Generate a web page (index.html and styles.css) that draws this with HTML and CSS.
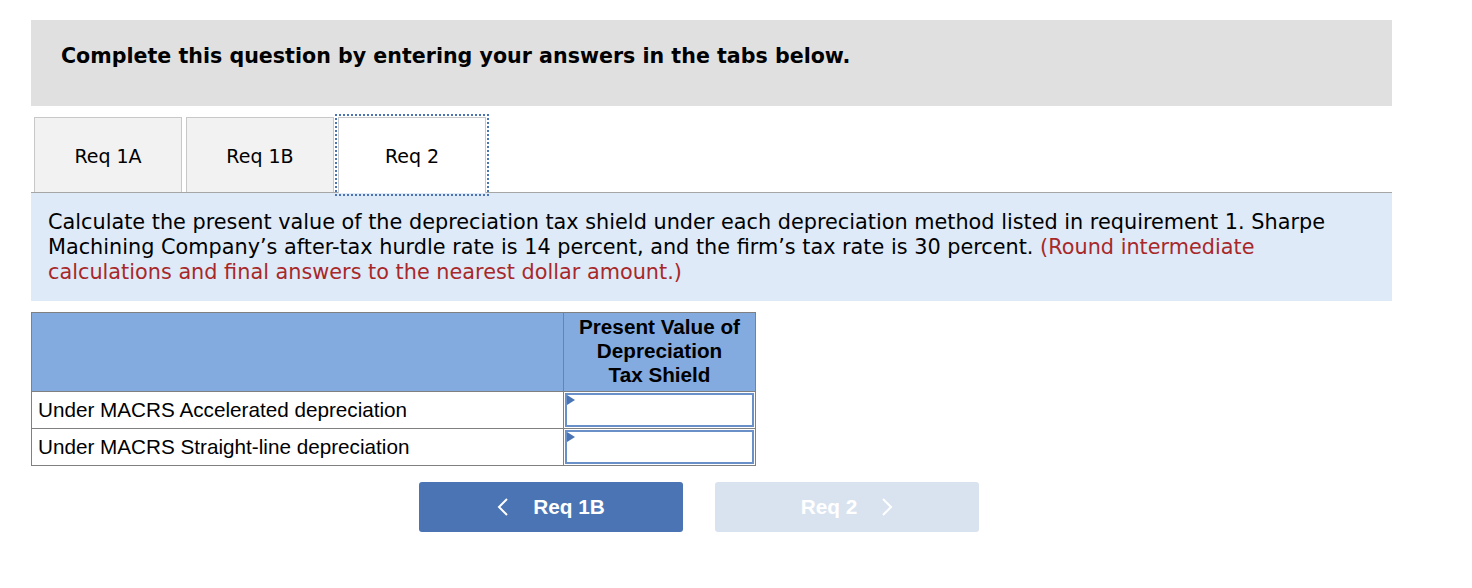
FILE: index.html
```html
<!DOCTYPE html>
<html lang="en">
<head>
    <meta charset="UTF-8">
    <title>Req 2</title>
    <link rel="stylesheet" href="styles.css">
</head>
<body>
    <div class="page">
        <div class="banner">Complete this question by entering your answers in the tabs below.</div>

        <!-- tabs -->
        <div class="tabs">
            <div class="tab">Req 1A</div>
            <div class="tab">Req 1B</div>
            <div class="tab active">Req 2</div>
        </div>

        <div class="prompt">
            Calculate the present value of the depreciation tax shield under each depreciation method listed in requirement 1. Sharpe Machining Company’s after-tax hurdle rate is 14 percent, and the firm’s tax rate is 30 percent. <span class="hint">(Round intermediate calculations and final answers to the nearest dollar amount.)</span>
        </div>

        <table class="grid">
            <tr class="head">
                <th class="label-col"></th>
                <th class="value-col">Present Value of<br>Depreciation<br>Tax Shield</th>
            </tr>
            <tr>
                <td class="label">Under MACRS Accelerated depreciation</td>
                <td class="cell"><div class="entry"><input type="text"></div></td>
            </tr>
            <tr>
                <td class="label">Under MACRS Straight-line depreciation</td>
                <td class="cell"><div class="entry"><input type="text"></div></td>
            </tr>
        </table>

        <div class="nav">
            <button class="nav-btn prev">
                <svg width="12" height="18" viewBox="0 0 12 18"><path d="M10 1 L2 9 L10 17" fill="none" stroke="#fff" stroke-width="2"/></svg>
                <span>Req 1B</span>
            </button>
            <button class="nav-btn next" disabled>
                <span>Req 2</span>
                <svg width="12" height="18" viewBox="0 0 12 18"><path d="M2 1 L10 9 L2 17" fill="none" stroke="#fff" stroke-width="2"/></svg>
            </button>
        </div>
    </div>
</body>
</html>
```

FILE: styles.css
```css
body {
    margin: 0;
    background: #fff;
    font-family: "DejaVu Sans", Verdana, sans-serif;
    color: #000;
}
.page {
    width: 1361px;
    padding: 20px 0 0 31px;
}
.banner {
    height: 86px;
    box-sizing: border-box;
    padding: 24px 30px 0;
    background: #e0e0e0;
    font-size: 20.6px;
    font-weight: bold;
    line-height: 24px;
}
.tabs {
    display: flex;
    align-items: flex-end;
    height: 86px;
    padding-left: 3px;
    border-bottom: 1px solid #a6a6a6;
}
.tab {
    width: 146px;
    height: 74px;
    margin-right: 4px;
    border: 1px solid #c8c8c8;
    border-bottom: none;
    background: #f2f2f2;
    font-size: 19px;
    line-height: 76px;
    text-align: center;
}
.tab.active {
    height: 75px;
    margin-bottom: -1px;
    background: #fff;
    outline: 2px dotted #4a74b4;
    outline-offset: 1px;
}
.prompt {
    padding: 17px 40px 16px 17px;
    background: #deeaf7;
    font-size: 20.8px;
    line-height: 25px;
}
.hint {
    color: #a8282a;
}
.grid {
    margin-top: 11px;
    border-collapse: collapse;
    border: 1px solid #808080;
    font-family: "Liberation Sans", Arial, sans-serif;
    font-size: 20.7px;
}
.grid th {
    height: 76px;
    padding: 2px 0 0;
    background: #84abdf;
    vertical-align: top;
    line-height: 24px;
}
.label-col {
    width: 531px;
}
.value-col {
    width: 191px;
    border-left: 1px solid #808080;
}
.grid td {
    height: 36px;
    padding: 0;
    border-top: 1px solid #808080;
}
.label {
    padding-left: 6px !important;
}
.cell {
    border-left: 1px solid #808080;
}
.entry {
    position: relative;
    padding: 1px;
}
.entry::before {
    content: "";
    position: absolute;
    left: 3px;
    top: 3px;
    border-left: 8px solid #4a74b4;
    border-top: 5px solid transparent;
    border-bottom: 5px solid transparent;
}
.entry input {
    display: block;
    width: 100%;
    height: 34px;
    box-sizing: border-box;
    border: 2px solid #6a90c9;
    background: #fff;
    outline: none;
}
.nav {
    display: flex;
    gap: 32px;
    margin-top: 16px;
    padding-left: 388px;
}
.nav-btn {
    display: flex;
    align-items: center;
    justify-content: center;
    gap: 24px;
    width: 264px;
    height: 50px;
    border: none;
    border-radius: 3px;
    color: #fff;
    font-family: "Liberation Sans", Arial, sans-serif;
    font-size: 20.8px;
    font-weight: bold;
}
.prev {
    background: #4a74b4;
}
.next {
    background: #d9e3ef;
}
```
